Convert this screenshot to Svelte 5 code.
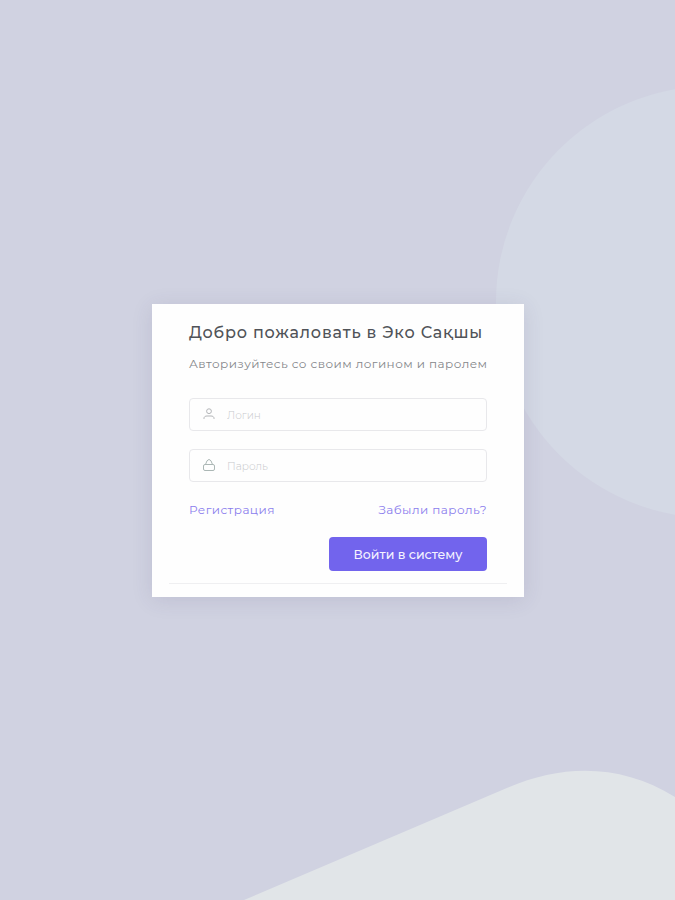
<script lang="ts">
	let login = $state('');
	let password = $state('');

	function submit(event: SubmitEvent) {
		event.preventDefault();
	}
</script>

<main class="page">
	<svg class="shapes" viewBox="0 0 675 900" preserveAspectRatio="none" aria-hidden="true">
		<circle cx="712" cy="302" r="216" fill="#d4d9e5" />
		<path d="M244 900L508 787.500C564 763.500 622 764 675 797V900Z" fill="#e1e5e8" />
	</svg>

	<section class="card">
		<form onsubmit={submit}>
			<h1>Добро пожаловать в Эко Сақшы</h1>
			<p class="subtitle">Авторизуйтесь со своим логином и паролем</p>

			<label class="field">
				<svg width="14" height="14" viewBox="0 0 14 14" aria-hidden="true">
					<circle cx="7" cy="4.200" r="2.400" />
					<path d="M2 12V11.300C2 9.700 3.300 9 5 9H9C10.700 9 12 9.700 12 11.300V12" />
				</svg>
				<input type="text" placeholder="Логин" bind:value={login} />
			</label>

			<label class="field">
				<svg class="lock" width="14" height="14" viewBox="0 0 14 14" aria-hidden="true">
					<rect x="1.500" y="6.500" width="11" height="6" rx="1.500" />
					<path d="M3.500 6.500L5 2.800Q7 0 9 2.800L10.500 6.500" />
				</svg>
				<input type="password" placeholder="Пароль" bind:value={password} />
			</label>

			<div class="links">
				<a class="register" href="#register">Регистрация</a>
				<a class="forgot" href="#forgot">Забыли пароль?</a>
			</div>

			<button type="submit">Войти в систему</button>
		</form>
		<hr />
	</section>
</main>

<style>
	:global(body) {
		margin: 0;
	}

	.page {
		position: relative;
		display: flex;
		align-items: center;
		justify-content: center;
		height: 100vh;
		padding-top: 1px;
		box-sizing: border-box;
		overflow: hidden;
		background: #d0d2e1;
		font-family: Montserrat, Inter, sans-serif;
	}

	.shapes {
		position: absolute;
		inset: 0;
		width: 100%;
		height: 100%;
	}

	.card {
		position: relative;
		width: 372px;
		height: 293px;
		margin-left: 1px;
		padding: 0 17px;
		box-sizing: border-box;
		background: #fefefe;
		box-shadow: 0 3px 20px rgba(65, 60, 105, 0.12);
	}

	form {
		display: flex;
		flex-direction: column;
		padding: 19px 20px 0;
	}

	h1 {
		margin: 0;
		color: #505358;
		font-size: 16px;
		font-weight: 500;
		line-height: 20px;
		letter-spacing: 0.8px;
		white-space: nowrap;
	}

	.subtitle {
		margin: 13px 0 26px;
		color: #85878b;
		font-size: 12px;
		line-height: 16px;
		letter-spacing: 0.44px;
		white-space: nowrap;
	}

	.field {
		display: flex;
		align-items: center;
		gap: 11px;
		height: 33px;
		margin-bottom: 18px;
		padding: 0 12px;
		box-sizing: border-box;
		border: 1px solid #e8e8eb;
		border-radius: 4px;
	}

	.field svg {
		flex-shrink: 0;
		margin-bottom: 2px;
		fill: none;
		stroke: #b3b5b8;
		stroke-width: 1;
	}

	.field .lock {
		stroke: #abb7b5;
	}

	input {
		flex: 1;
		min-width: 0;
		padding: 2px 0 0;
		border: 0;
		outline: 0;
		background: transparent;
		color: #484b50;
		font: 300 10.5px Montserrat, Inter, sans-serif;
	}

	input::placeholder {
		color: #c8c9cc;
		opacity: 1;
	}

	.links {
		display: flex;
		justify-content: space-between;
		margin-bottom: 18px;
		font-size: 12px;
		line-height: 19px;
		letter-spacing: 0.45px;
	}

	a {
		color: #8b7ded;
		text-decoration: none;
	}

	button {
		align-self: flex-end;
		width: 158px;
		height: 34px;
		padding: 0;
		border: 0;
		border-radius: 4px;
		background: #7264ed;
		color: #f5f3ff;
		font: 500 12.5px Montserrat, Inter, sans-serif;
		cursor: pointer;
	}

	hr {
		margin: 12px 0 0;
		border: 0;
		border-top: 1px solid #efeff1;
	}
</style>
